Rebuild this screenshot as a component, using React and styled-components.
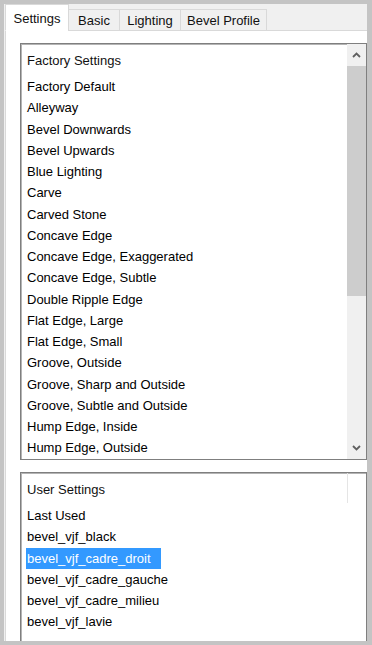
import React from 'react';
import styled, { createGlobalStyle } from 'styled-components';

const GlobalStyle = createGlobalStyle`
  html, body {
    margin: 0;
    padding: 0;
    background: #c4c4c4;
  }
  body {
    font-family: "Liberation Sans", Arial, sans-serif;
    font-size: 13px;
    color: #000;
  }
`;

const Frame = styled.div`
  width: 372px;
  height: 645px;
  box-sizing: border-box;
  padding: 4px 5px 4px 4px;
  background: #c4c4c4;
`;

const Window = styled.div`
  height: 100%;
  background: #f0f0f0;
  display: flex;
  flex-direction: column;
  overflow: hidden;
`;

const TabStrip = styled.div`
  display: flex;
  align-items: flex-end;
  height: 27px;
  padding-left: 1px;
  position: relative;
  z-index: 1;
`;

const Tab = styled.div`
  box-sizing: border-box;
  width: ${p => p.width}px;
  height: ${p => (p.active ? 27 : 22)}px;
  display: flex;
  align-items: center;
  justify-content: center;
  background: ${p => (p.active ? '#fff' : '#f0f0f0')};
  border: 1px solid #d9d9d9;
  border-bottom: ${p => (p.active ? '1px solid #fff' : '1px solid #d9d9d9')};
  margin-left: ${p => (p.first ? 0 : -1)}px;
  padding-top: ${p => (p.active ? 1 : 1)}px;
  white-space: nowrap;
  color: #111;
`;

const Panel = styled.div`
  flex: 1;
  margin-top: -1px;
  margin-left: 1px;
  background: #fff;
  border: 1px solid #d9d9d9;
  border-bottom: none;
  border-right: none;
  padding: 12px 0 0 14px;
  display: flex;
  flex-direction: column;
  min-height: 0;
`;

const ListBox = styled.div`
  box-sizing: border-box;
  border: 1px solid #7f7f7f;
  box-shadow: inset 1px 1px 0 #b4b4b4;
  background: #fff;
  display: grid;
  grid-template-columns: 1fr ${p => (p.scroll ? '19px' : '0')};
  height: ${p => (p.fill ? 'auto' : `${p.h}px`)};
  flex: ${p => (p.fill ? '1 0 auto' : 'none')};
  margin-top: ${p => p.gap || 0}px;
  ${p => p.fill && 'border-bottom: none; min-height: 180px;'}
`;

const Items = styled.div`
  padding: 2px 0 0 6px;
  overflow: hidden;
`;

const Header = styled.div`
  height: 30px;
  line-height: 30px;
  display: flex;
  justify-content: space-between;
  color: #111;
`;

const HeaderDivider = styled.span`
  width: 1px;
  height: 30px;
  margin-top: -2px;
  margin-right: 18px;
  background: #e5e5e5;
`;

const Row = styled.div`
  height: 21.25px;
  line-height: 21.25px;
  white-space: nowrap;
`;

const Label = styled.span`
  display: inline-block;
  height: 100%;
  padding: 0 10px 0 1px;
  margin-left: -1px;
  background: ${p => (p.selected ? '#3399ff' : 'transparent')};
  color: ${p => (p.selected ? '#fff' : '#000')};
`;

const ScrollBar = styled.div`
  display: flex;
  flex-direction: column;
  background: #f0f0f0;
`;

const Arrow = styled.div`
  height: 22px;
  display: flex;
  align-items: center;
  justify-content: center;
  flex: none;
`;

const Thumb = styled.div`
  height: 230px;
  background: #cdcdcd;
  flex: none;
`;

const Track = styled.div`
  flex: 1;
`;

const Chevron = ({ down }) => (
  <svg width="9" height="6" viewBox="0 0 9 6">
    <path
      d={down ? 'M1 1 L4.5 4.5 L8 1' : 'M1 5 L4.5 1.5 L8 5'}
      fill="none"
      stroke="#606060"
      strokeWidth="1.8"
    />
  </svg>
);

const tabs = [
  { name: 'Settings', width: 64 },
  { name: 'Basic', width: 52 },
  { name: 'Lighting', width: 62 },
  { name: 'Bevel Profile', width: 87 },
];

const factory = [
  'Factory Default',
  'Alleyway',
  'Bevel Downwards',
  'Bevel Upwards',
  'Blue Lighting',
  'Carve',
  'Carved Stone',
  'Concave Edge',
  'Concave Edge, Exaggerated',
  'Concave Edge, Subtle',
  'Double Ripple Edge',
  'Flat Edge, Large',
  'Flat Edge, Small',
  'Groove, Outside',
  'Groove, Sharp and Outside',
  'Groove, Subtle and Outside',
  'Hump Edge, Inside',
  'Hump Edge, Outside',
];

const user = [
  'Last Used',
  'bevel_vjf_black',
  'bevel_vjf_cadre_droit',
  'bevel_vjf_cadre_gauche',
  'bevel_vjf_cadre_milieu',
  'bevel_vjf_lavie',
];

const App = () => {
  const selected = 'bevel_vjf_cadre_droit';
  return (
    <Frame>
      <GlobalStyle />
      <Window>
        <TabStrip>
          {tabs.map((t, i) => (
            <Tab key={t.name} width={t.width} active={i === 0} first={i === 0}>
              {t.name}
            </Tab>
          ))}
        </TabStrip>
        <Panel>
          <ListBox scroll h={417}>
            <Items>
              <Header>Factory Settings</Header>
              {factory.map(f => (
                <Row key={f}>
                  <Label>{f}</Label>
                </Row>
              ))}
            </Items>
            <ScrollBar>
              <Arrow>
                <Chevron />
              </Arrow>
              <Thumb />
              <Track />
              <Arrow>
                <Chevron down />
              </Arrow>
            </ScrollBar>
          </ListBox>
          <ListBox fill gap={12}>
            <Items>
              <Header>
                User Settings
                <HeaderDivider />
              </Header>
              {user.map(u => (
                <Row key={u}>
                  <Label selected={u === selected}>{u}</Label>
                </Row>
              ))}
            </Items>
          </ListBox>
        </Panel>
      </Window>
    </Frame>
  );
};

export default App;
